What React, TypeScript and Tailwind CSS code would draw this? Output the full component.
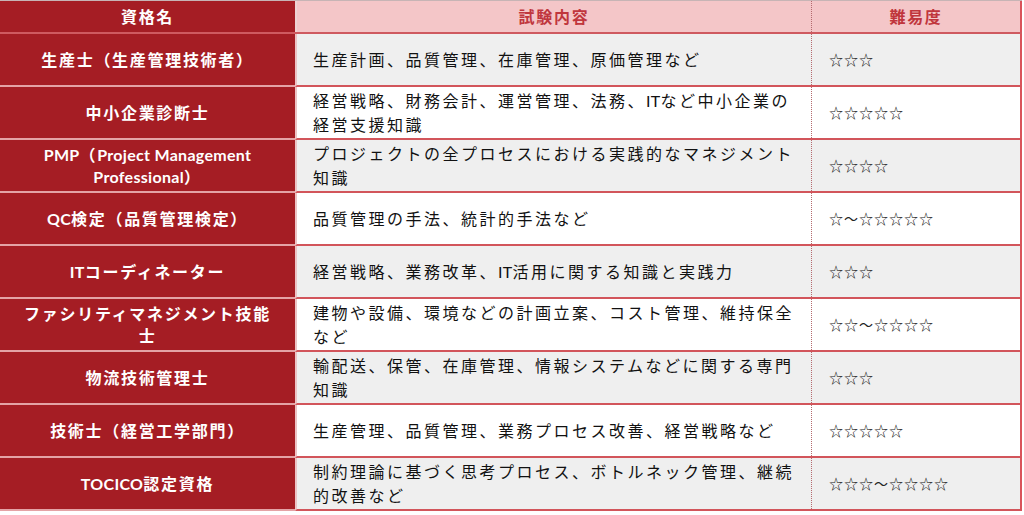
import React from 'react';

// latin runs keep normal spacing; only the kana/kanji get the wide tracking
const L = ({ children }: { children: React.ReactNode }) => (
  <span className="tracking-[0.3px]">{children}</span>
);

const rows: { name: React.ReactNode; body: React.ReactNode; level: string }[] = [
  { name: '生産士（生産管理技術者）', body: '生産計画、品質管理、在庫管理、原価管理など', level: '☆☆☆' },
  {
    name: '中小企業診断士',
    body: (
      <>
        経営戦略、財務会計、運営管理、法務、<L>IT</L>など中小企業の
        <br />
        経営支援知識
      </>
    ),
    level: '☆☆☆☆☆',
  },
  {
    name: (
      <>
        <L>PMP</L>（<L>Project Management</L>
        <br />
        <L>Professional</L>）
      </>
    ),
    body: (
      <>
        プロジェクトの全プロセスにおける実践的なマネジメント
        <br />
        知識
      </>
    ),
    level: '☆☆☆☆',
  },
  {
    name: (
      <>
        <L>QC</L>検定（品質管理検定）
      </>
    ),
    body: '品質管理の手法、統計的手法など',
    level: '☆〜☆☆☆☆☆',
  },
  {
    name: (
      <>
        <L>IT</L>コーディネーター
      </>
    ),
    body: (
      <>
        経営戦略、業務改革、<L>IT</L>活用に関する知識と実践力
      </>
    ),
    level: '☆☆☆',
  },
  {
    name: (
      <>
        ファシリティマネジメント技能
        <br />
        士
      </>
    ),
    body: (
      <>
        建物や設備、環境などの計画立案、コスト管理、維持保全
        <br />
        など
      </>
    ),
    level: '☆☆〜☆☆☆☆',
  },
  {
    name: '物流技術管理士',
    body: (
      <>
        輸配送、保管、在庫管理、情報システムなどに関する専門
        <br />
        知識
      </>
    ),
    level: '☆☆☆',
  },
  { name: '技術士（経営工学部門）', body: '生産管理、品質管理、業務プロセス改善、経営戦略など', level: '☆☆☆☆☆' },
  {
    name: (
      <>
        <L>TOCICO</L>認定資格
      </>
    ),
    body: (
      <>
        制約理論に基づく思考プロセス、ボトルネック管理、継続
        <br />
        的改善など
      </>
    ),
    level: '☆☆☆〜☆☆☆☆',
  },
];

export default function App() {
  return (
    <div className="w-[1024px] h-[515px] bg-white font-['Lato','Noto_Sans_CJK_JP',sans-serif]">
      <div className="w-[1022px] border-t border-[#c7b4b5]">
        {/* header */}
        <div className="grid grid-cols-[295px_516px_211px] h-[33px] border-b-2 border-[#cf5a60]">
          <div className="bg-[#a51d24] flex items-center justify-center text-white font-bold text-[16px] tracking-[1.7px]">
            資格名
          </div>
          <div className="bg-[#f4c6c8] flex items-center justify-center text-[#c0363d] font-bold text-[16px] tracking-[1.7px] border-l-2 border-[#eed2d3]">
            試験内容
          </div>
          <div className="bg-[#f4c6c8] border-r-2 border-[#d9535a]">
            <div className="h-full flex items-center justify-center text-[#c0363d] font-bold text-[16px] tracking-[1.7px] border-l border-dotted border-[#b46a6e]">
              難易度
            </div>
          </div>
        </div>

        {rows.map((r, i) => (
          <div key={i} className="grid grid-cols-[295px_516px_211px] h-[53px]">
            <div className="bg-[#a51d24] flex items-center justify-center text-center text-white font-bold text-[16px] leading-[22px] tracking-[1.7px] border-b-2 border-[#e4a3a6]">
              <span>{r.name}</span>
            </div>
            <div
              className={`${i % 2 === 0 ? 'bg-[#efefef]' : 'bg-white'} flex items-center pl-[16px] text-[16px] leading-[24px] tracking-[2.5px] text-[#111] border-l-2 border-l-[#ecc3c5] border-b-2 border-b-[#d2555b]`}
            >
              <span>{r.body}</span>
            </div>
            <div
              className={`${i % 2 === 0 ? 'bg-[#efefef]' : 'bg-white'} border-r-2 border-r-[#d9535a] border-b-2 border-b-[#d2555b]`}
            >
              <div className="h-full flex items-center pl-[17px] text-[14px] tracking-[1px] text-[#222] border-l border-dotted border-[#b46a6e]">
                <span>{r.level}</span>
              </div>
            </div>
          </div>
        ))}
      </div>
    </div>
  );
}
